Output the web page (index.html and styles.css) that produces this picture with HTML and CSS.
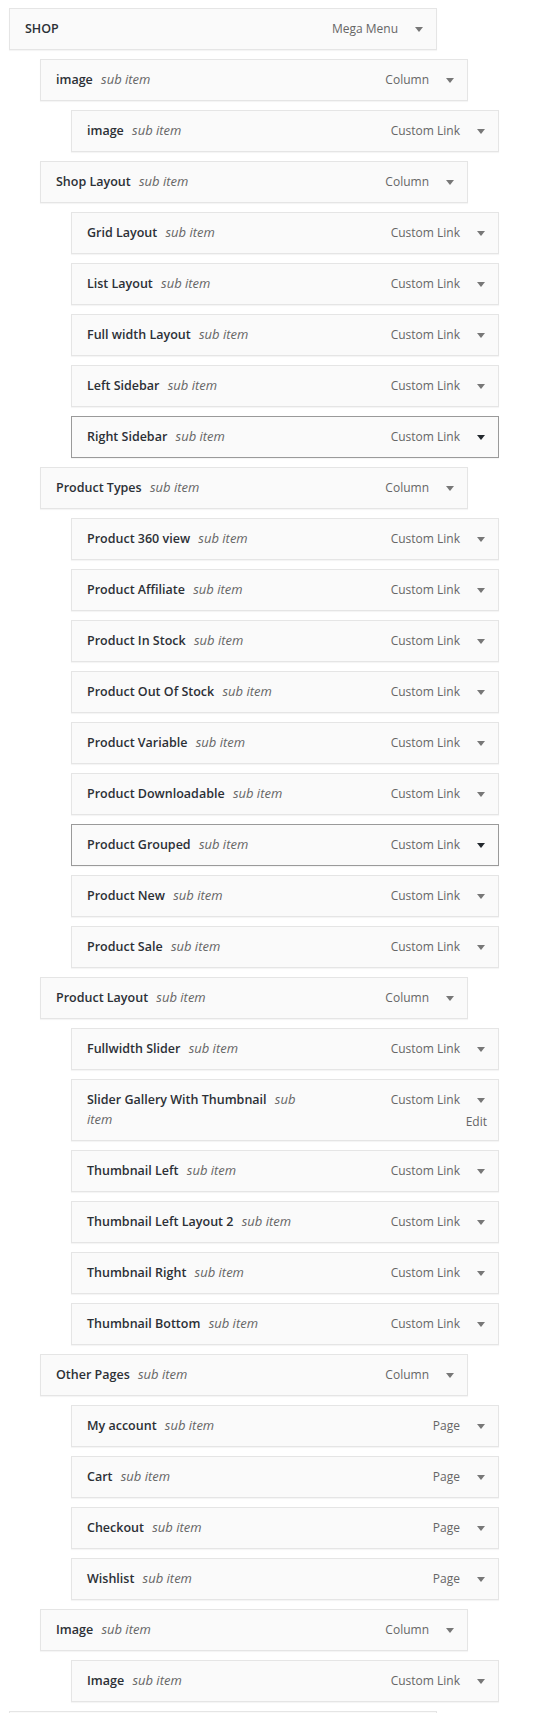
FILE: index.html
```html
<!DOCTYPE html>
<html lang="en">
<head>
<meta charset="utf-8">
<title>Menu structure</title>
<link rel="stylesheet" href="styles.css">
</head>
<body>
<div class="viewport">
<ul class="menu">
  <li class="item depth-0"><div class="handle"><span class="title">SHOP</span><span class="controls"><span class="row"><span class="type">Mega Menu</span><svg class="arrow" viewBox="0 0 8 5"><path d="M0 0h8L4 5z"/></svg></span></span></div></li>
  <li class="item depth-1"><div class="handle"><span class="title">image <span class="sub">sub item</span></span><span class="controls"><span class="row"><span class="type">Column</span><svg class="arrow" viewBox="0 0 8 5"><path d="M0 0h8L4 5z"/></svg></span></span></div></li>
  <li class="item depth-2"><div class="handle"><span class="title">image <span class="sub">sub item</span></span><span class="controls"><span class="row"><span class="type">Custom Link</span><svg class="arrow" viewBox="0 0 8 5"><path d="M0 0h8L4 5z"/></svg></span></span></div></li>
  <li class="item depth-1"><div class="handle"><span class="title">Shop Layout <span class="sub">sub item</span></span><span class="controls"><span class="row"><span class="type">Column</span><svg class="arrow" viewBox="0 0 8 5"><path d="M0 0h8L4 5z"/></svg></span></span></div></li>
  <li class="item depth-2"><div class="handle"><span class="title">Grid Layout <span class="sub">sub item</span></span><span class="controls"><span class="row"><span class="type">Custom Link</span><svg class="arrow" viewBox="0 0 8 5"><path d="M0 0h8L4 5z"/></svg></span></span></div></li>
  <li class="item depth-2"><div class="handle"><span class="title">List Layout <span class="sub">sub item</span></span><span class="controls"><span class="row"><span class="type">Custom Link</span><svg class="arrow" viewBox="0 0 8 5"><path d="M0 0h8L4 5z"/></svg></span></span></div></li>
  <li class="item depth-2"><div class="handle"><span class="title">Full width Layout <span class="sub">sub item</span></span><span class="controls"><span class="row"><span class="type">Custom Link</span><svg class="arrow" viewBox="0 0 8 5"><path d="M0 0h8L4 5z"/></svg></span></span></div></li>
  <li class="item depth-2"><div class="handle"><span class="title">Left Sidebar <span class="sub">sub item</span></span><span class="controls"><span class="row"><span class="type">Custom Link</span><svg class="arrow" viewBox="0 0 8 5"><path d="M0 0h8L4 5z"/></svg></span></span></div></li>
  <li class="item depth-2"><div class="handle active"><span class="title">Right Sidebar <span class="sub">sub item</span></span><span class="controls"><span class="row"><span class="type">Custom Link</span><svg class="arrow" viewBox="0 0 8 5"><path d="M0 0h8L4 5z"/></svg></span></span></div></li>
  <li class="item depth-1"><div class="handle"><span class="title">Product Types <span class="sub">sub item</span></span><span class="controls"><span class="row"><span class="type">Column</span><svg class="arrow" viewBox="0 0 8 5"><path d="M0 0h8L4 5z"/></svg></span></span></div></li>
  <li class="item depth-2"><div class="handle"><span class="title">Product 360 view <span class="sub">sub item</span></span><span class="controls"><span class="row"><span class="type">Custom Link</span><svg class="arrow" viewBox="0 0 8 5"><path d="M0 0h8L4 5z"/></svg></span></span></div></li>
  <li class="item depth-2"><div class="handle"><span class="title">Product Affiliate <span class="sub">sub item</span></span><span class="controls"><span class="row"><span class="type">Custom Link</span><svg class="arrow" viewBox="0 0 8 5"><path d="M0 0h8L4 5z"/></svg></span></span></div></li>
  <li class="item depth-2"><div class="handle"><span class="title">Product In Stock <span class="sub">sub item</span></span><span class="controls"><span class="row"><span class="type">Custom Link</span><svg class="arrow" viewBox="0 0 8 5"><path d="M0 0h8L4 5z"/></svg></span></span></div></li>
  <li class="item depth-2"><div class="handle"><span class="title">Product Out Of Stock <span class="sub">sub item</span></span><span class="controls"><span class="row"><span class="type">Custom Link</span><svg class="arrow" viewBox="0 0 8 5"><path d="M0 0h8L4 5z"/></svg></span></span></div></li>
  <li class="item depth-2"><div class="handle"><span class="title">Product Variable <span class="sub">sub item</span></span><span class="controls"><span class="row"><span class="type">Custom Link</span><svg class="arrow" viewBox="0 0 8 5"><path d="M0 0h8L4 5z"/></svg></span></span></div></li>
  <li class="item depth-2"><div class="handle"><span class="title">Product Downloadable <span class="sub">sub item</span></span><span class="controls"><span class="row"><span class="type">Custom Link</span><svg class="arrow" viewBox="0 0 8 5"><path d="M0 0h8L4 5z"/></svg></span></span></div></li>
  <li class="item depth-2"><div class="handle active"><span class="title">Product Grouped <span class="sub">sub item</span></span><span class="controls"><span class="row"><span class="type">Custom Link</span><svg class="arrow" viewBox="0 0 8 5"><path d="M0 0h8L4 5z"/></svg></span></span></div></li>
  <li class="item depth-2"><div class="handle"><span class="title">Product New <span class="sub">sub item</span></span><span class="controls"><span class="row"><span class="type">Custom Link</span><svg class="arrow" viewBox="0 0 8 5"><path d="M0 0h8L4 5z"/></svg></span></span></div></li>
  <li class="item depth-2"><div class="handle"><span class="title">Product Sale <span class="sub">sub item</span></span><span class="controls"><span class="row"><span class="type">Custom Link</span><svg class="arrow" viewBox="0 0 8 5"><path d="M0 0h8L4 5z"/></svg></span></span></div></li>
  <li class="item depth-1"><div class="handle"><span class="title">Product Layout <span class="sub">sub item</span></span><span class="controls"><span class="row"><span class="type">Column</span><svg class="arrow" viewBox="0 0 8 5"><path d="M0 0h8L4 5z"/></svg></span></span></div></li>
  <li class="item depth-2"><div class="handle"><span class="title">Fullwidth Slider <span class="sub">sub item</span></span><span class="controls"><span class="row"><span class="type">Custom Link</span><svg class="arrow" viewBox="0 0 8 5"><path d="M0 0h8L4 5z"/></svg></span></span></div></li>
  <li class="item depth-2"><div class="handle"><span class="title">Slider Gallery With Thumbnail <span class="sub">sub item</span></span><span class="controls"><span class="row"><span class="type">Custom Link</span><svg class="arrow" viewBox="0 0 8 5"><path d="M0 0h8L4 5z"/></svg></span><span class="edit">Edit</span></span></div></li>
  <li class="item depth-2"><div class="handle"><span class="title">Thumbnail Left <span class="sub">sub item</span></span><span class="controls"><span class="row"><span class="type">Custom Link</span><svg class="arrow" viewBox="0 0 8 5"><path d="M0 0h8L4 5z"/></svg></span></span></div></li>
  <li class="item depth-2"><div class="handle"><span class="title">Thumbnail Left Layout 2 <span class="sub">sub item</span></span><span class="controls"><span class="row"><span class="type">Custom Link</span><svg class="arrow" viewBox="0 0 8 5"><path d="M0 0h8L4 5z"/></svg></span></span></div></li>
  <li class="item depth-2"><div class="handle"><span class="title">Thumbnail Right <span class="sub">sub item</span></span><span class="controls"><span class="row"><span class="type">Custom Link</span><svg class="arrow" viewBox="0 0 8 5"><path d="M0 0h8L4 5z"/></svg></span></span></div></li>
  <li class="item depth-2"><div class="handle"><span class="title">Thumbnail Bottom <span class="sub">sub item</span></span><span class="controls"><span class="row"><span class="type">Custom Link</span><svg class="arrow" viewBox="0 0 8 5"><path d="M0 0h8L4 5z"/></svg></span></span></div></li>
  <li class="item depth-1"><div class="handle"><span class="title">Other Pages <span class="sub">sub item</span></span><span class="controls"><span class="row"><span class="type">Column</span><svg class="arrow" viewBox="0 0 8 5"><path d="M0 0h8L4 5z"/></svg></span></span></div></li>
  <li class="item depth-2"><div class="handle"><span class="title">My account <span class="sub">sub item</span></span><span class="controls"><span class="row"><span class="type">Page</span><svg class="arrow" viewBox="0 0 8 5"><path d="M0 0h8L4 5z"/></svg></span></span></div></li>
  <li class="item depth-2"><div class="handle"><span class="title">Cart <span class="sub">sub item</span></span><span class="controls"><span class="row"><span class="type">Page</span><svg class="arrow" viewBox="0 0 8 5"><path d="M0 0h8L4 5z"/></svg></span></span></div></li>
  <li class="item depth-2"><div class="handle"><span class="title">Checkout <span class="sub">sub item</span></span><span class="controls"><span class="row"><span class="type">Page</span><svg class="arrow" viewBox="0 0 8 5"><path d="M0 0h8L4 5z"/></svg></span></span></div></li>
  <li class="item depth-2"><div class="handle"><span class="title">Wishlist <span class="sub">sub item</span></span><span class="controls"><span class="row"><span class="type">Page</span><svg class="arrow" viewBox="0 0 8 5"><path d="M0 0h8L4 5z"/></svg></span></span></div></li>
  <li class="item depth-1"><div class="handle"><span class="title">Image <span class="sub">sub item</span></span><span class="controls"><span class="row"><span class="type">Column</span><svg class="arrow" viewBox="0 0 8 5"><path d="M0 0h8L4 5z"/></svg></span></span></div></li>
  <li class="item depth-2"><div class="handle"><span class="title">Image <span class="sub">sub item</span></span><span class="controls"><span class="row"><span class="type">Custom Link</span><svg class="arrow" viewBox="0 0 8 5"><path d="M0 0h8L4 5z"/></svg></span></span></div></li>
  <li class="item depth-0"><div class="handle"></div></li>
</ul>
</div>
</body>
</html>
```

FILE: styles.css
```css
* {
  box-sizing: border-box;
}

html,
body {
  margin: 0;
  padding: 0;
  background: #ffffff;
}

body {
  font-family: "Open Sans", "Noto Sans", sans-serif;
  font-size: 13px;
  color: #23282d;
}

.viewport {
  height: 1713px;
  overflow: hidden;
}

.menu {
  list-style: none;
  margin: 8px 0 0;
  padding: 0 0 0 9px;
}

.item + .item {
  margin-top: 9px;
}

.depth-1 {
  margin-left: 31px;
}

.depth-2 {
  margin-left: 62px;
}

.handle {
  width: 428px;
  min-height: 42px;
  display: flex;
  align-items: flex-start;
  padding: 10px 13px 10px 15px;
  background: #fafafa;
  border: 1px solid #e5e5e5;
  box-shadow: 0 1px 1px rgba(0, 0, 0, 0.04);
  line-height: 20px;
}

.handle.active {
  border-color: #9a9a9a;
}

.title {
  display: block;
  width: 227px;
  font-size: 12.5px;
  line-height: 20px;
  font-weight: 600;
  color: #2c3036;
}

.sub {
  margin-left: 5px;
  font-size: 13px;
  line-height: 14px;
  font-style: italic;
  font-weight: 400;
  color: #666666;
}

.controls {
  margin-left: auto;
  display: flex;
  flex-direction: column;
  align-items: flex-end;
}

.row {
  display: flex;
  align-items: center;
  gap: 17px;
  height: 20px;
}

.type {
  font-size: 12px;
  color: #666666;
}

.arrow {
  width: 8px;
  height: 5px;
  margin-top: 1px;
  fill: #777777;
}

.active .arrow {
  fill: #23282d;
}

.edit {
  margin-top: 3px;
  margin-right: -2px;
  line-height: 17px;
  font-size: 12px;
  color: #666666;
}
```
